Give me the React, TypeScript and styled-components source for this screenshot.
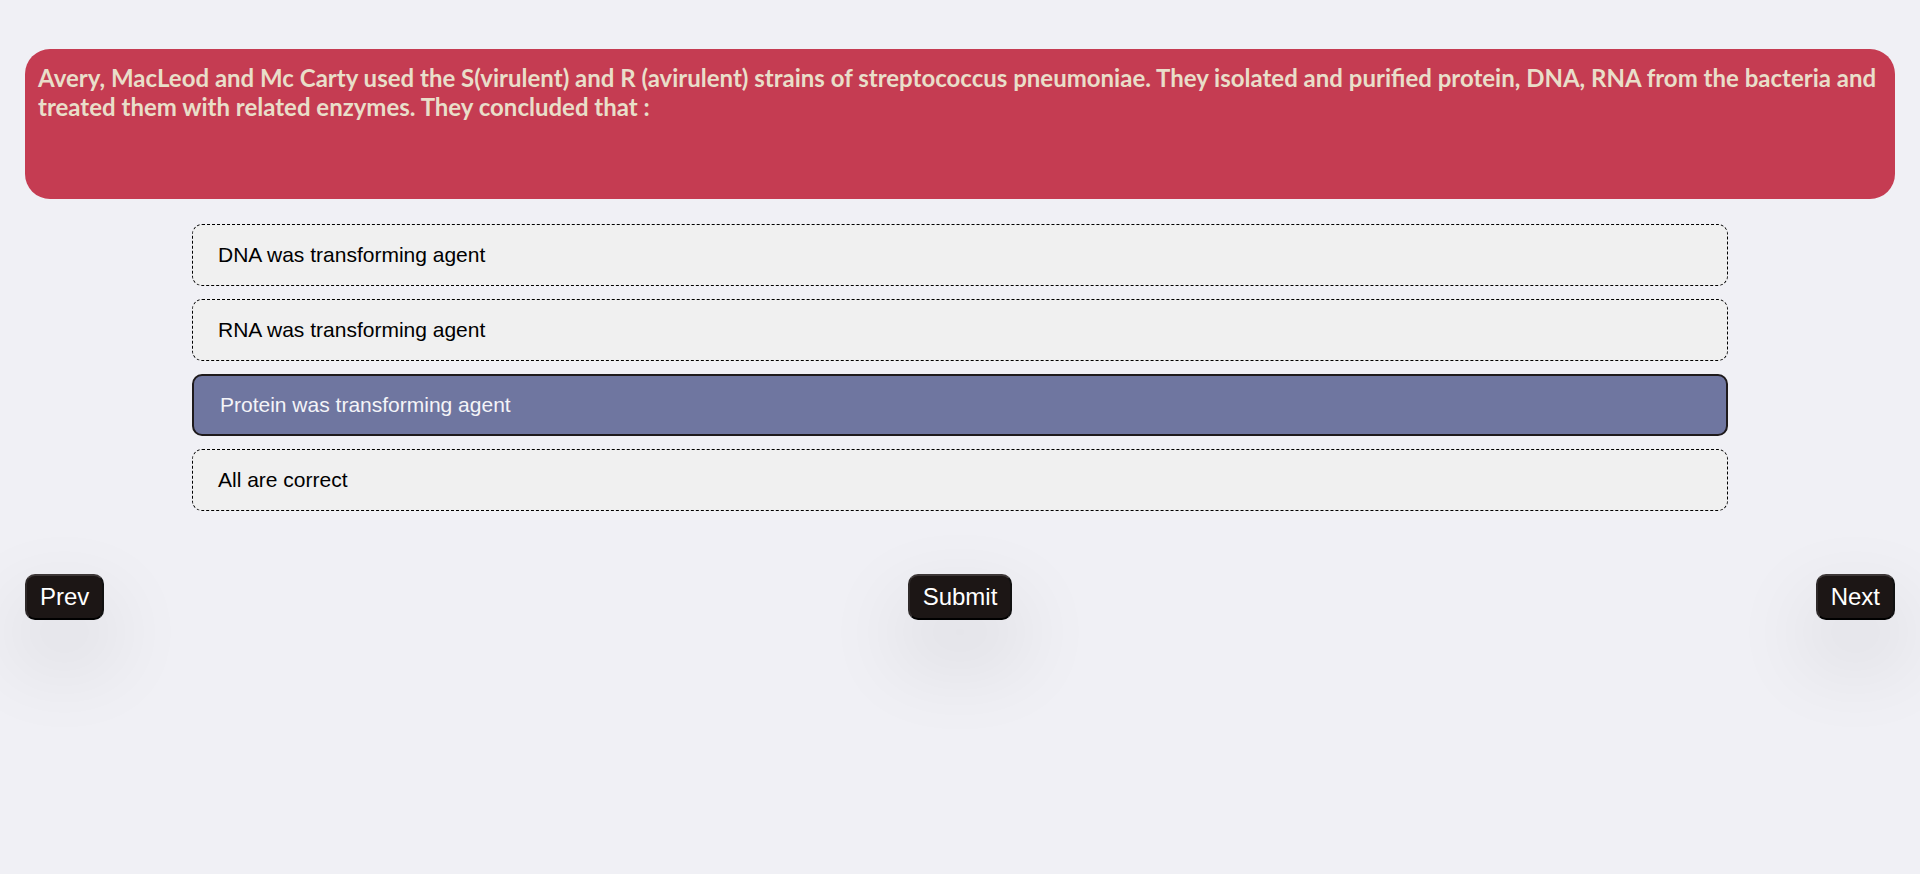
import React, { useState } from "react";
import styled, { createGlobalStyle } from "styled-components";

const GlobalStyle = createGlobalStyle`
  body {
    margin: 0;
    background-color: #f0f0f5;
    font-family: "Liberation Sans", Arial, sans-serif;
  }
`;

const Page = styled.div`
  box-sizing: border-box;
  min-height: 100vh;
  display: flex;
  flex-flow: column;
  padding: 49px 25px 0;
`;

const QuestionCard = styled.div`
  box-sizing: border-box;
  height: 150px;
  padding: 14px 13px;
  border-radius: 25px;
  background-color: #c53c52;
`;

const QuestionText = styled.h3`
  margin: 0;
  font-family: Lato, "Open Sans", sans-serif;
  font-weight: 700;
  font-size: 24px;
  line-height: 29px;
  color: #e9dec9;
`;

const OptionList = styled.div`
  display: flex;
  flex-flow: column;
  gap: 13px;
  width: 1536px;
  margin: 25px auto 0;
`;

const Option = styled.div<{ $selected: boolean }>`
  box-sizing: border-box;
  height: 62px;
  display: flex;
  align-items: center;
  padding-left: ${(p) => (p.$selected ? "26px" : "25px")};
  border-radius: 10px;
  border: ${(p) => (p.$selected ? "2px solid #1e1a1c" : "1px dashed #000")};
  background-color: ${(p) => (p.$selected ? "#6f76a0" : "#f0f0f0")};
  color: ${(p) => (p.$selected ? "#f4f4f8" : "#000")};
  font-size: 21px;
  cursor: pointer;
`;

const ButtonRow = styled.div`
  display: flex;
  justify-content: space-between;
  align-items: center;
  margin-top: 63px;
`;

const NavButton = styled.button`
  font-family: "Liberation Sans", Arial, sans-serif;
  font-size: 24px;
  line-height: 27.6px;
  padding: 7px 13px;
  border: 2px solid;
  border-color: #3d3737 #111 #000 #2e2929;
  border-radius: 10px;
  background-color: #1c1615;
  color: #fff;
  box-shadow: 0 35px 80px 15px rgba(0, 0, 0, 0.07);
  cursor: pointer;
`;

const options = [
  "DNA was transforming agent",
  "RNA was transforming agent",
  "Protein was transforming agent",
  "All are correct",
];

const App = () => {
  const [selected, setSelected] = useState(2);

  return (
    <>
      <GlobalStyle />
      <Page>
        <QuestionCard>
          <QuestionText>
            Avery, MacLeod and Mc Carty used the S(virulent) and R (avirulent)
            strains of streptococcus pneumoniae. They isolated and purified
            protein, DNA, RNA from the bacteria and treated them with related
            enzymes. They concluded that :
          </QuestionText>
        </QuestionCard>
        <OptionList>
          {options.map((text, i) => (
            <Option
              key={text}
              $selected={selected === i}
              onClick={() => setSelected(i)}
            >
              {text}
            </Option>
          ))}
        </OptionList>
        <ButtonRow>
          <NavButton>Prev</NavButton>
          <NavButton>Submit</NavButton>
          <NavButton>Next</NavButton>
        </ButtonRow>
      </Page>
    </>
  );
};

export default App;
